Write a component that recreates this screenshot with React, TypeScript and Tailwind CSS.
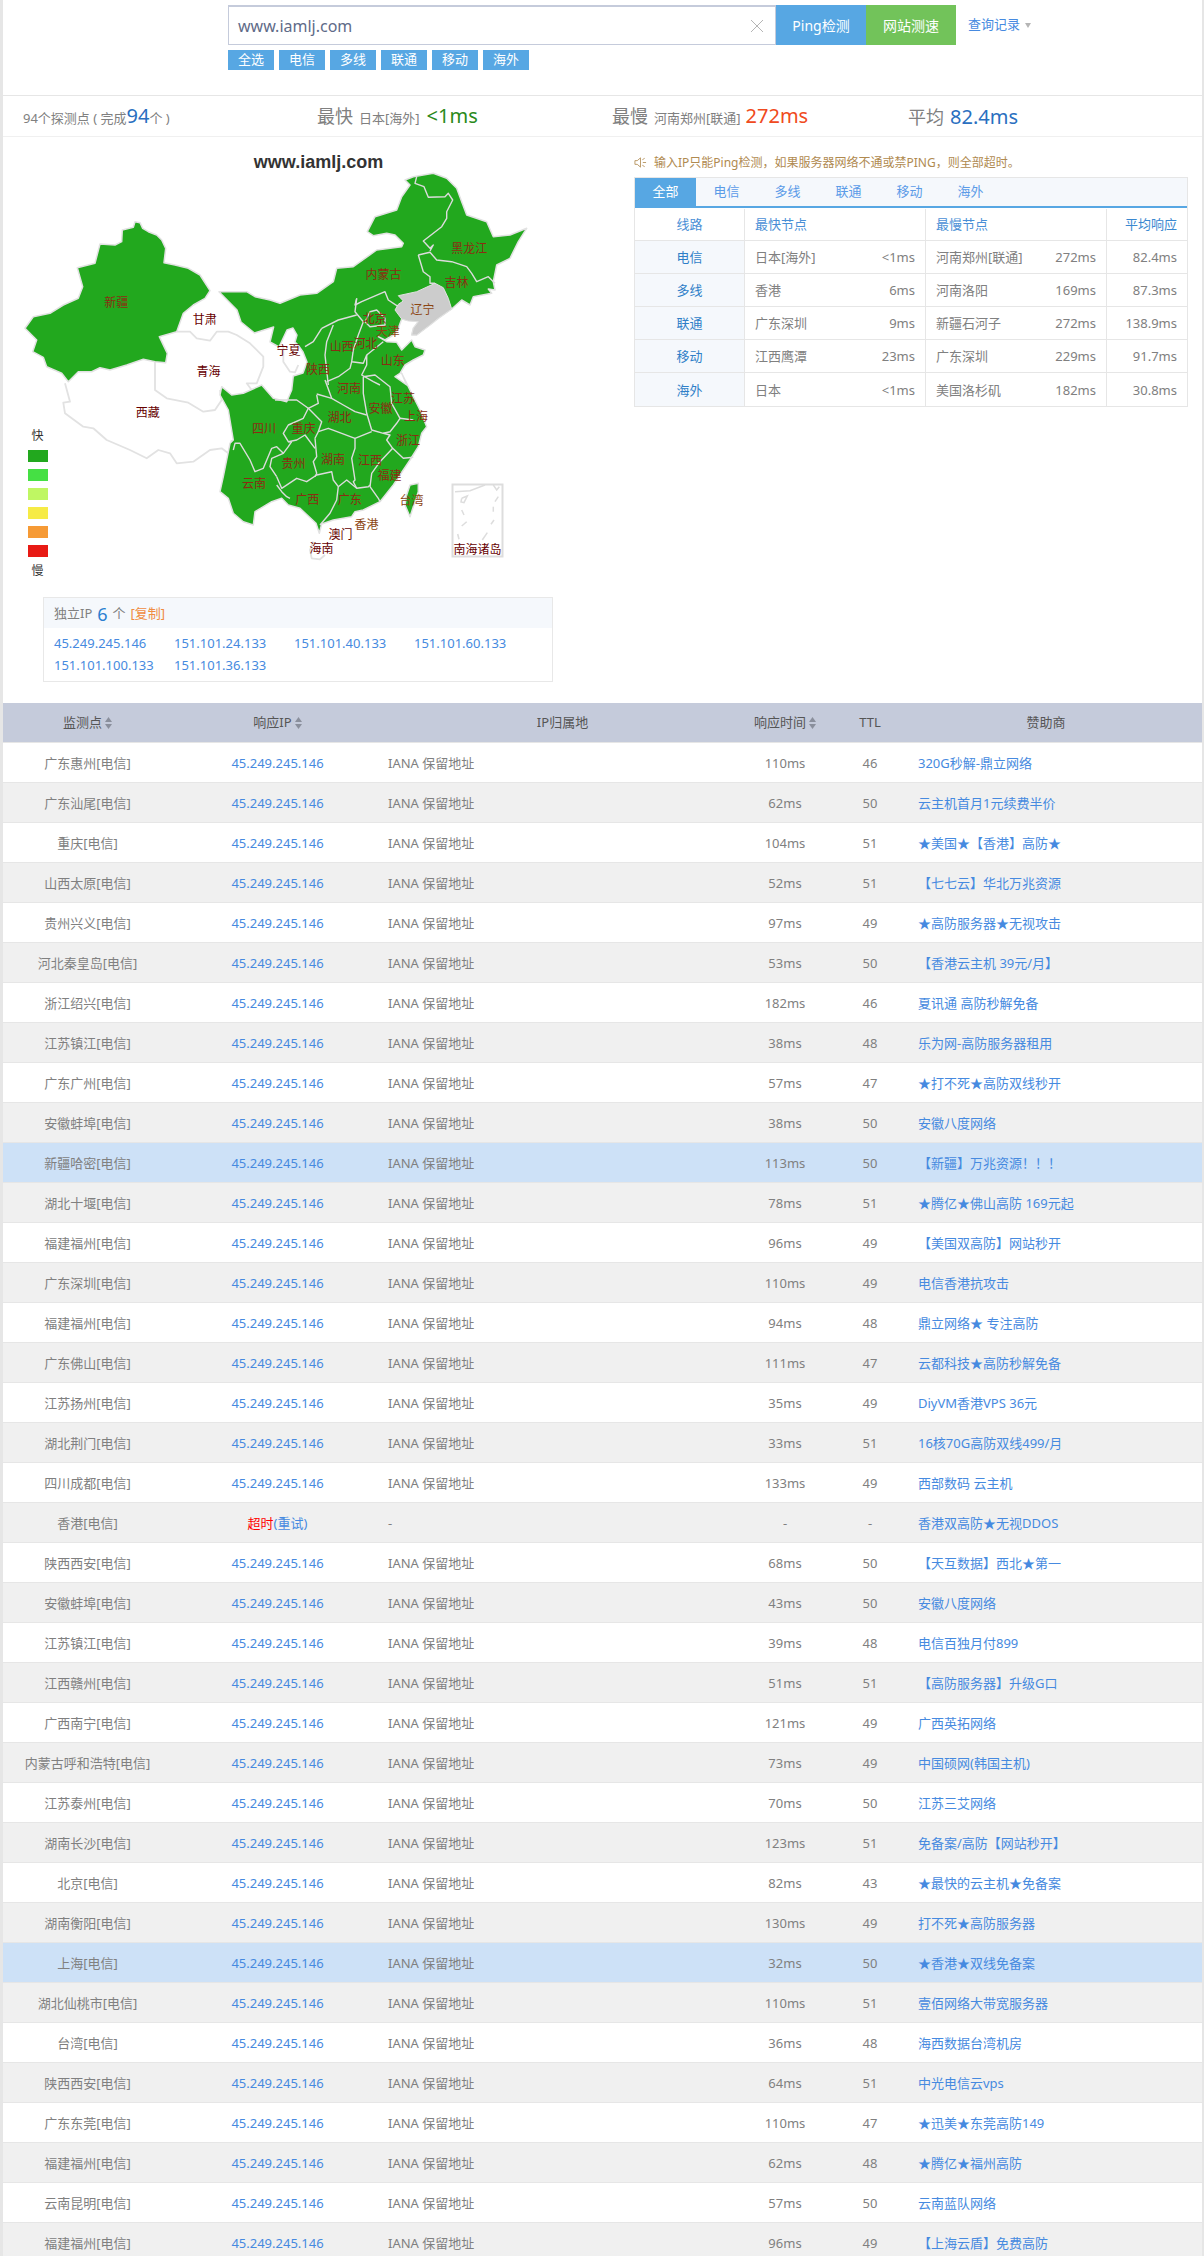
import React from 'react';

// map points are read from 3x crops, at() turns them back to page coordinates
const at = (ox: number, oy: number, s: string) =>
  s
    .trim()
    .split(/\s+/)
    .map((p) => {
      const [x, y] = p.split(',').map(Number);
      return `${(ox + x / 3).toFixed(1)},${(oy + y / 3).toFixed(1)}`;
    })
    .join(' ');

const z7 = (s: string) => at(20, 220, s);
const z8 = (s: string) => at(270, 165, s);
const z9 = (s: string) => at(200, 370, s);
const z10 = (s: string) => at(360, 370, s);

const xinjiang = z7(
  '345,5 360,8 368,25 385,35 410,45 425,60 437,85 432,128 465,135 505,145 540,165 570,212 555,235 520,255 490,280 470,335 418,350 442,400 437,428 405,425 370,418 320,435 270,450 240,443 215,455 175,455 145,485 125,460 80,440 70,412 38,395 50,360 15,325 40,290 90,280 130,255 175,235 188,200 172,143 225,130 240,72 285,75 305,65 307,30 340,22',
);

const mainland = [
  z7('597,215 640,215 680,215 705,230 750,240'),
  z8(
    '30,415 90,390 140,385 190,350 200,310 250,305 320,255 395,245 400,235 375,210 350,205 310,212 292,200 315,155 380,135 395,95 420,60 405,45 430,35 490,25 530,40 560,70 575,110 590,150 650,170 670,215 720,210 770,190 745,230 720,280 680,300 670,350 675,375 655,372 665,385 610,395 600,420 575,405 545,432 505,460 480,480 440,510 425,510 430,490 445,470 395,462 385,490 370,510 345,525 325,515 350,530 380,532 395,555 425,525 435,545 465,555 460,570 430,585 405,600 390,625 375,635 410,660',
  ),
  z10('125,10 145,50 165,90 180,120 200,170 185,190 175,230 150,270 130,300 100,345 60,395'),
  z9(
    '490,420 465,425 455,440 400,450 365,462 358,490 348,460 300,415 265,405 245,385 215,395 165,425 160,465 130,455 100,430 85,385 60,365 70,320 90,220 100,210 85,120 60,75 65,50 95,75 130,70 185,45 220,85 260,95 275,60 280,18',
  ),
  '303,373 307,362 303,352 298,345 295,342 297,335 293,328 287,330 279,347 270,342 273.6,327 254.5,333 241,322 237,310',
].join(' ');

const liaoning = z8(
  '495,355 520,368 535,400 545,432 505,460 480,480 440,510 425,510 430,490 445,470 415,468 395,462 375,435 385,418 400,408 385,392 440,380',
);
const taiwan = z10('150,345 175,340 175,365 160,410 150,440 135,405 140,375');

const whiteLines = [
  z7('135,490 150,545 130,548 135,580 190,620 220,625 260,660 330,690 380,715 415,690 450,700 470,730 520,725 570,690 605,685 625,700 635,660'),
  z7('405,425 405,510 440,535 505,548 550,575 585,570 605,540 600,510'),
  z7('470,335 510,335 530,355 570,362 590,335 625,335 650,345 690,370 730,410 730,440 710,490 680,490 695,510 710,525 720,500'),
  z8('40,545 40,590 60,620 75,622 85,600'),
  z9('340,515 330,540 335,565 360,568 375,555'),
];

const borders = [
  z8('440,35 435,55 462,65 475,97 525,95 535,85 548,105 530,140 530,160 515,185 460,228 480,250 490,240 480,258'),
  z8('445,270 480,262 500,285 545,290 590,305 605,325 620,350 655,335 675,355'),
  z8('445,270 460,320 480,335 480,355 495,355'),
  z8('260,400 255,440 280,470 265,510 250,555 245,590 280,595 290,570 340,530'),
  z8('260,400 255,420 275,410 345,380 355,405 385,425'),
  z8('155,490 205,465 260,450'),
  z8('190,480 170,530 165,570 175,660'),
  z8('155,490 130,530 105,545'),
  z8('285,470 300,440 320,435 345,460 345,480 300,485 285,470'),
  z8('290,570 290,600 275,630 310,650 330,660'),
  z8('245,590 240,610 205,635 170,650'),
  z9('375,30 395,85 430,105 465,125 500,135'),
  z9('350,72 395,85'),
  z9('490,20 490,70 500,130 515,180 550,190 570,185 590,160 600,145 640,150'),
  z9('490,20 525,15 570,50 575,100 600,145'),
  z9('465,205 515,185'),
  z9('550,190 570,195 560,210 578,235 610,265 640,262'),
  z9('578,235 540,275 515,310 510,350 535,385 540,395'),
  z9('465,205 465,235 455,265 465,330 460,335 470,355 505,350 510,345'),
  z9('415,350 440,330 470,355'),
  z9('345,205 355,185 385,175 425,190 465,205'),
  z9('350,75 355,100 325,115 365,155 355,185'),
  z9('225,90 290,90 325,115 310,145 265,165 250,190 265,215 275,215'),
  z9('265,215 290,210 315,195 345,235'),
  z9('345,205 350,260 340,275 350,310 345,320'),
  z9('230,320 245,355 290,325 320,335 350,315 395,305 400,330 415,350 410,390 390,430 360,465'),
  z9('230,320 210,290 215,265 250,250 230,230 215,235 190,295 165,305 150,270 120,220 105,220 100,240'),
  z9('230,345 245,365 260,380 270,385'),
  z9('250,250 265,230 275,215'),
];

const seaDashes = [
  '285,365 330,362 375,345',
  '400,345 410,360 418,350',
  '305,385 322,378 312,398 303,396 305,385',
  '305,420 312,435',
  '400,410 400,425',
  '415,380 405,395',
  '320,455 305,468',
  '402,450 393,463',
  '293,492 297,508',
  '382,488 367,510',
];

const MAROON = '#660000';
const RUST = '#8a2d12';
const BROWN = '#8b4513';

const labels: [string, number, number, string][] = [
  ['新疆', 304, 488, RUST],
  ['甘肃', 535, 538, MAROON],
  ['青海', 545, 693, MAROON],
  ['西藏', 386, 817, MAROON],
  ['宁夏', 754, 630, MAROON],
  ['内蒙古', 1002, 403, RUST],
  ['黑龙江', 1226, 325, RUST],
  ['吉林', 1193, 427, RUST],
  ['辽宁', 1104, 508, BROWN],
  ['北京', 979, 535, RUST],
  ['天津', 1013, 575, BROWN],
  ['河北', 955, 610, RUST],
  ['山西', 893, 620, RUST],
  ['山东', 1026, 660, RUST],
  ['陕西', 831, 687, RUST],
  ['河南', 912, 745, RUST],
  ['江苏', 1053, 775, RUST],
  ['安徽', 994, 805, RUST],
  ['上海', 1087, 828, RUST],
  ['湖北', 887, 832, RUST],
  ['四川', 690, 865, RUST],
  ['重庆', 793, 865, RUST],
  ['浙江', 1066, 901, RUST],
  ['湖南', 870, 958, RUST],
  ['江西', 967, 960, RUST],
  ['贵州', 767, 970, RUST],
  ['福建', 1018, 1006, RUST],
  ['云南', 664, 1030, RUST],
  ['广西', 803, 1078, RUST],
  ['广东', 914, 1078, RUST],
  ['台湾', 1075, 1080, BROWN],
  ['香港', 958, 1153, BROWN],
  ['澳门', 890, 1182, MAROON],
  ['海南', 840, 1224, MAROON],
  ['南海诸岛', 1248, 1228, MAROON],
];

const legend = ['#22a81e', '#45e044', '#bff763', '#f6eb46', '#f69a35', '#e81a14'];

const ChinaMap = () => (
  <svg viewBox="3 137 597 460" width={597} height={460} className="block">
    <text x={318.5} y={168} textAnchor="middle" fontSize={18} fontWeight={700} fill="#333" fontFamily="'Liberation Sans', sans-serif">
      www.iamlj.com
    </text>
    {whiteLines.map((p) => (
      <polyline key={p} points={p} fill="none" stroke="#e2e2e2" strokeWidth={1.8} strokeLinejoin="round" />
    ))}
    <polygon points={xinjiang} fill="#22a81e" stroke="#e2e2e2" strokeWidth={1.5} strokeLinejoin="round" />
    <polygon points={mainland} fill="#22a81e" stroke="#e2e2e2" strokeWidth={1.5} strokeLinejoin="round" />
    <polygon points={taiwan} fill="#22a81e" stroke="#e2e2e2" strokeWidth={1.5} strokeLinejoin="round" />
    {borders.map((p) => (
      <polyline key={p} points={p} fill="none" stroke="#dcdcdc" strokeWidth={1.4} strokeLinejoin="round" />
    ))}
    <polygon points={liaoning} fill="#cccccc" stroke="#e2e2e2" strokeWidth={1} strokeLinejoin="round" />
    <rect x={452.5} y={484.5} width={50} height={72} fill="#fff" stroke="#dddddd" strokeWidth={2} />
    {seaDashes.map((p) => (
      <polyline key={p} points={z10(p)} fill="none" stroke="#dddddd" strokeWidth={1.5} />
    ))}
    {labels.map(([name, x, y, color]) => (
      <text
        key={name}
        x={x / 2.613}
        y={140 + y / 3 + 4.5}
        textAnchor="middle"
        fontSize={12}
        fill={color}
      >
        {name}
      </text>
    ))}
    <text x={37.5} y={439.5} textAnchor="middle" fontSize={12} fill="#333">
      快
    </text>
    {legend.map((c, i) => (
      <rect key={c} x={28} y={450 + i * 19} width={20} height={12} fill={c} />
    ))}
    <text x={37.5} y={574.5} textAnchor="middle" fontSize={12} fill="#333">
      慢
    </text>
  </svg>
);

const Speaker = () => (
  <svg viewBox="0 0 14 14" width={13} height={13} fill="none" stroke="#b08a50" strokeWidth={0.9}>
    <path d="M1 5h2.500L7 2v10L3.500 9H1z" />
    <path d="M9 4l2.500-1.500M9.500 7H13M9 10l2.500 1.500" />
  </svg>
);

const Sort = () => (
  <svg viewBox="0 0 7 12" width={7} height={12} className="ml-[3px] inline-block" fill="#8a8f9c">
    <path d="M3.500 0L7 5H0z" />
    <path d="M3.500 12L0 7h7z" />
  </svg>
);

const tabs = ['全部', '电信', '多线', '联通', '移动', '海外'];
const filters = ['全选', '电信', '多线', '联通', '移动', '海外'];
const ips = ['45.249.245.146', '151.101.24.133', '151.101.40.133', '151.101.60.133', '151.101.100.133', '151.101.36.133'];

const lines = [
  ['电信', '日本[海外]', '<1ms', '河南郑州[联通]', '272ms', '82.4ms'],
  ['多线', '香港', '6ms', '河南洛阳', '169ms', '87.3ms'],
  ['联通', '广东深圳', '9ms', '新疆石河子', '272ms', '138.9ms'],
  ['移动', '江西鹰潭', '23ms', '广东深圳', '229ms', '91.7ms'],
  ['海外', '日本', '<1ms', '美国洛杉矶', '182ms', '30.8ms'],
];

const rows: [string, string, string, string][] = [
  ['广东惠州', '110ms', '46', '320G秒解-鼎立网络'],
  ['广东汕尾', '62ms', '50', '云主机首月1元续费半价'],
  ['重庆', '104ms', '51', '★美国★【香港】高防★'],
  ['山西太原', '52ms', '51', '【七七云】华北万兆资源'],
  ['贵州兴义', '97ms', '49', '★高防服务器★无视攻击'],
  ['河北秦皇岛', '53ms', '50', '【香港云主机 39元/月】'],
  ['浙江绍兴', '182ms', '46', '夏讯通 高防秒解免备'],
  ['江苏镇江', '38ms', '48', '乐为网-高防服务器租用'],
  ['广东广州', '57ms', '47', '★打不死★高防双线秒开'],
  ['安徽蚌埠', '38ms', '50', '安徽八度网络'],
  ['新疆哈密', '113ms', '50', '【新疆】万兆资源！！！'],
  ['湖北十堰', '78ms', '51', '★腾亿★佛山高防 169元起'],
  ['福建福州', '96ms', '49', '【美国双高防】网站秒开'],
  ['广东深圳', '110ms', '49', '电信香港抗攻击'],
  ['福建福州', '94ms', '48', '鼎立网络★ 专注高防'],
  ['广东佛山', '111ms', '47', '云都科技★高防秒解免备'],
  ['江苏扬州', '35ms', '49', 'DiyVM香港VPS 36元'],
  ['湖北荆门', '33ms', '51', '16核70G高防双线499/月'],
  ['四川成都', '133ms', '49', '西部数码 云主机'],
  ['香港', '-', '-', '香港双高防★无视DDOS'],
  ['陕西西安', '68ms', '50', '【天互数据】西北★第一'],
  ['安徽蚌埠', '43ms', '50', '安徽八度网络'],
  ['江苏镇江', '39ms', '48', '电信百独月付899'],
  ['江西赣州', '51ms', '51', '【高防服务器】升级G口'],
  ['广西南宁', '121ms', '49', '广西英拓网络'],
  ['内蒙古呼和浩特', '73ms', '49', '中国硕网(韩国主机)'],
  ['江苏泰州', '70ms', '50', '江苏三艾网络'],
  ['湖南长沙', '123ms', '51', '免备案/高防【网站秒开】'],
  ['北京', '82ms', '43', '★最快的云主机★免备案'],
  ['湖南衡阳', '130ms', '49', '打不死★高防服务器'],
  ['上海', '32ms', '50', '★香港★双线免备案'],
  ['湖北仙桃市', '110ms', '51', '壹佰网络大带宽服务器'],
  ['台湾', '36ms', '48', '海西数据台湾机房'],
  ['陕西西安', '64ms', '51', '中光电信云vps'],
  ['广东东莞', '110ms', '47', '★迅美★东莞高防149'],
  ['福建福州', '62ms', '48', '★腾亿★福州高防'],
  ['云南昆明', '57ms', '50', '云南蓝队网络'],
  ['福建福州', '96ms', '49', '【上海云盾】免费高防'],
];

const rowBg = (i: number) => {
  if (i === 10 || i === 30) return 'bg-[#cde1f7]';
  return i % 2 === 1 ? 'bg-[#f0f0f0]' : 'bg-white';
};

const App = () => {
  return (
    <div className="h-[2256px] overflow-hidden border-l-[3px] border-r-2 border-[#e6e6e6] bg-white text-[13px] text-[#808080] font-['Noto_Sans','Noto_Sans_CJK_SC',sans-serif]">
      {/* search */}
      <div className="h-[96px] border-b border-[#e6e6e6] pl-[225px] pt-[5px]">
        <div className="flex h-10 items-stretch">
          <div className="flex w-[548px] items-center justify-between border border-t-2 border-[#c5cbdb] pl-[9px] pr-[11px] text-[16px] text-[#5f6b88]">
            <span>www.iamlj.com</span>
            <svg viewBox="0 0 14 14" width={14} height={14} fill="none" stroke="#b5b5b5" strokeWidth={1}>
              <path d="M1 1l12 12M13 1L1 13" />
            </svg>
          </div>
          <button className="w-[90px] bg-[#57a7e3] text-[14px] text-white">Ping检测</button>
          <button className="w-[90px] bg-[#72c35a] text-[14px] text-white">网站测速</button>
          <div className="ml-3 flex items-center text-[#468ae0]">
            查询记录
            <span className="ml-[5px] mt-[1px] h-0 w-0 border-x-[3px] border-t-[5px] border-x-transparent border-t-[#b5b5b5]" />
          </div>
        </div>
        <div className="mt-[5px] flex gap-[5px]">
          {filters.map((f) => (
            <div key={f} className="flex h-5 w-[46px] items-center justify-center bg-[#57a7e3] text-white">
              {f}
            </div>
          ))}
        </div>
      </div>

      {/* summary */}
      <div className="grid h-[41px] grid-cols-[294px_295px_296px_1fr] items-center border-b border-[#f0f0f0] pl-[20px] pt-[2px]">
        <div className="flex items-baseline">
          94个探测点 ( 完成<span className="text-[20px] leading-none text-[#2a6fc0]">94</span>个 )
        </div>
        <div className="flex items-baseline">
          <span className="text-[18px] leading-none">最快</span>
          <span className="ml-[6px]">日本[海外]</span>
          <span className="ml-[7px] text-[20px] leading-none text-[#2a8a1a]">&lt;1ms</span>
        </div>
        <div className="flex items-baseline">
          <span className="text-[18px] leading-none">最慢</span>
          <span className="ml-[6px]">河南郑州[联通]</span>
          <span className="ml-[5px] text-[20px] leading-none text-[#f04a20]">272ms</span>
        </div>
        <div className="flex items-baseline">
          <span className="text-[18px] leading-none">平均</span>
          <span className="ml-[6px] text-[20px] leading-none text-[#2a6fc0]">82.4ms</span>
        </div>
      </div>

      {/* map and line summary */}
      <div className="flex h-[566px]">
        <div className="w-[597px]">
          <ChinaMap />
          <div className="ml-[40px] h-[85px] w-[510px] border border-[#e8e8e8]">
            <div className="flex h-[30px] items-center bg-[#f5f8fc] pl-[10px] pt-[2px]">
              独立IP
              <span className="mx-[5px] text-[18px] leading-none text-[#2a7fd0]">6</span>个
              <span className="ml-[5px] text-[#f08c40]">[复制]</span>
            </div>
            <div className="grid grid-cols-[120px_120px_120px_120px] pl-[10px] pt-[4px] leading-[22px] text-[#468ae0]">
              {ips.map((ip) => (
                <div key={ip}>{ip}</div>
              ))}
            </div>
          </div>
        </div>

        <div className="ml-[34px] w-[554px]">
          <div className="flex h-10 items-center pt-[11px] text-xs text-[#b08a50]">
            <Speaker />
            <span className="ml-[7px]">输入IP只能Ping检测，如果服务器网络不通或禁PING，则全部超时。</span>
          </div>
          <div className="border border-[#e6e6e6]">
            <div className="flex h-[30px] border-b-2 border-[#57a7e3] bg-[#f5f8fc] text-[#5b9be8]">
              {tabs.map((t, i) => (
                <div key={t} className={`flex w-[61px] items-center justify-center ${i === 0 ? 'bg-[#57a7e3] text-white' : ''}`}>
                  {t}
                </div>
              ))}
            </div>
            <div className="grid h-[33px] grid-cols-[110px_181px_181px_1fr] border-b border-[#e6e6e6] pt-[1px] text-[#4a8fd6]">
              <div className="flex items-center justify-center border-r border-[#e6e6e6]">线路</div>
              <div className="flex items-center border-r border-[#e6e6e6] px-[10px]">最快节点</div>
              <div className="flex items-center border-r border-[#e6e6e6] px-[10px]">最慢节点</div>
              <div className="flex items-center justify-end px-[10px] text-[#3a88d0]">平均响应</div>
            </div>
            {lines.map((l, i) => (
              <div
                key={l[0]}
                className={`grid h-[33px] grid-cols-[110px_181px_181px_1fr] ${i < lines.length - 1 ? 'border-b border-[#e6e6e6]' : ''}`}
              >
                <div className="flex items-center justify-center border-r border-[#e6e6e6] bg-[#f5f8fc] pt-[2px] text-[#2f7fc8]">{l[0]}</div>
                <div className="flex items-center justify-between border-r border-[#e6e6e6] px-[10px] pt-[2px]">
                  <span>{l[1]}</span>
                  <span>{l[2]}</span>
                </div>
                <div className="flex items-center justify-between border-r border-[#e6e6e6] px-[10px] pt-[2px]">
                  <span>{l[3]}</span>
                  <span>{l[4]}</span>
                </div>
                <div className="flex items-center justify-end px-[10px] pt-[2px]">{l[5]}</div>
              </div>
            ))}
          </div>
        </div>
      </div>

      {/* probes */}
      <div className="grid h-10 grid-cols-[169px_211px_359px_86px_84px_1fr] items-center border-b border-[#e6e6e6] bg-[#c5cbdb] text-center text-[#555]">
        <div className="flex items-center justify-center">
          监测点
          <Sort />
        </div>
        <div className="flex items-center justify-center">
          响应IP
          <Sort />
        </div>
        <div>IP归属地</div>
        <div className="flex items-center justify-center">
          响应时间
          <Sort />
        </div>
        <div>TTL</div>
        <div className="pr-[22px]">赞助商</div>
      </div>
      {rows.map((r, i) => (
        <div
          key={i}
          className={`grid h-10 grid-cols-[169px_211px_359px_86px_84px_1fr] items-center border-b border-[#e6e6e6] pt-[2px] ${rowBg(i)}`}
        >
          <div className="text-center">{r[0]}[电信]</div>
          {r[1] === '-' ? (
            <div className="text-center text-[#ff0000]">
              超时<span className="text-[#468ae0]">(重试)</span>
            </div>
          ) : (
            <div className="text-center text-[#468ae0]">45.249.245.146</div>
          )}
          <div className="pl-[5px]">{r[1] === '-' ? '-' : 'IANA 保留地址'}</div>
          <div className="text-center">{r[1]}</div>
          <div className="text-center">{r[2]}</div>
          <div className="pl-[6px] text-[#468ae0]">{r[3]}</div>
        </div>
      ))}
    </div>
  );
};

export default App;
